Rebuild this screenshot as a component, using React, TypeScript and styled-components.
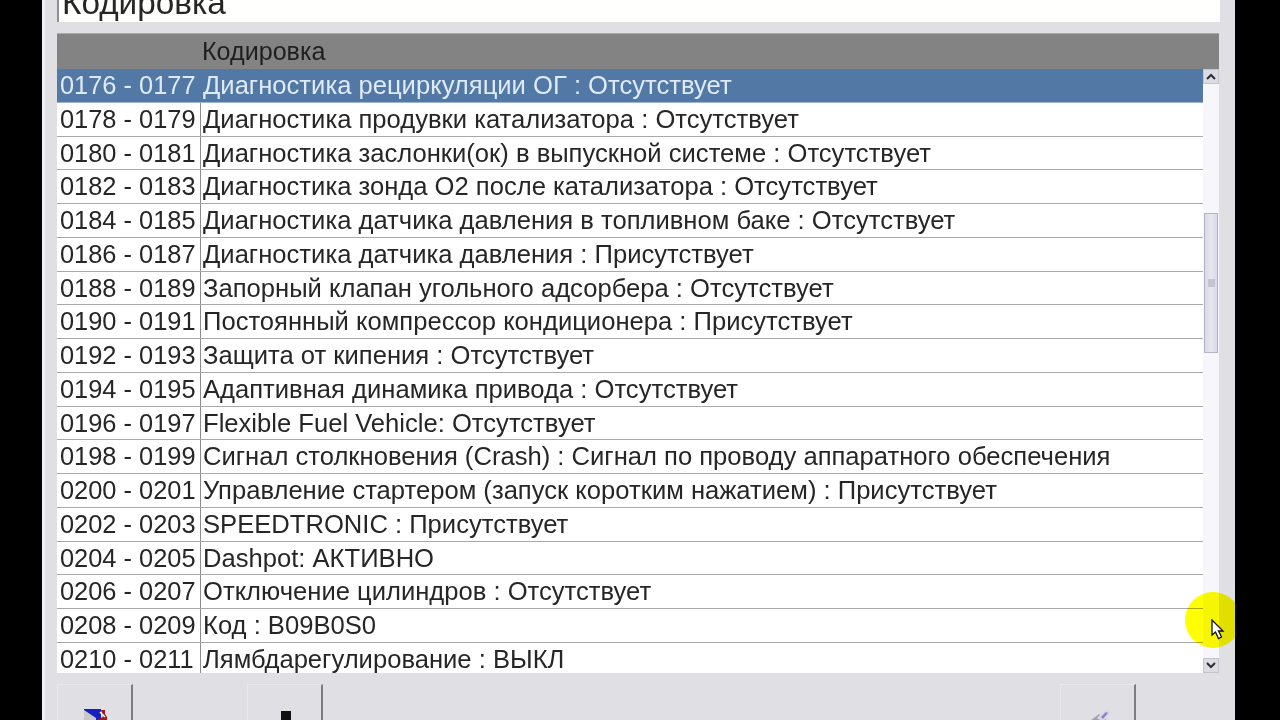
import React from "react"
import styled, { createGlobalStyle } from "styled-components"

const GlobalStyle = createGlobalStyle`
  html, body {
    margin: 0;
    height: 100%;
    overflow: hidden;
    background: #000;
  }
`

const rows = [
  ["0176 - 0177", "Диагностика рециркуляции ОГ : Отсутствует"],
  ["0178 - 0179", "Диагностика продувки катализатора : Отсутствует"],
  ["0180 - 0181", "Диагностика заслонки(ок) в выпускной системе : Отсутствует"],
  ["0182 - 0183", "Диагностика зонда О2 после катализатора : Отсутствует"],
  ["0184 - 0185", "Диагностика датчика давления в топливном баке : Отсутствует"],
  ["0186 - 0187", "Диагностика датчика давления : Присутствует"],
  ["0188 - 0189", "Запорный клапан угольного адсорбера : Отсутствует"],
  ["0190 - 0191", "Постоянный компрессор кондиционера : Присутствует"],
  ["0192 - 0193", "Защита от кипения : Отсутствует"],
  ["0194 - 0195", "Адаптивная динамика привода : Отсутствует"],
  ["0196 - 0197", "Flexible Fuel Vehicle: Отсутствует"],
  ["0198 - 0199", "Сигнал столкновения (Crash) : Сигнал по проводу аппаратного обеспечения"],
  ["0200 - 0201", "Управление стартером (запуск коротким нажатием) : Присутствует"],
  ["0202 - 0203", "SPEEDTRONIC : Присутствует"],
  ["0204 - 0205", "Dashpot: АКТИВНО"],
  ["0206 - 0207", "Отключение цилиндров : Отсутствует"],
  ["0208 - 0209", "Код : B09B0S0"],
  ["0210 - 0211", "Лямбдарегулирование : ВЫКЛ"],
]

const Screen = styled.div`
  box-sizing: border-box;
  position: relative;
  width: 1193px;
  height: 720px;
  margin-left: 42px;
  padding: 0 15px 0 12px;
  background: #e0dfe3;
  border-left: 3px solid #f0f0f2;
  display: flex;
  flex-direction: column;
  overflow: hidden;
  font-family: "Liberation Sans", Arial, sans-serif;
  color: #262626;
`

const TitleField = styled.div`
  box-sizing: border-box;
  flex: none;
  height: 22px;
  padding-left: 3px;
  background: #fffffd;
  border-left: 2px solid #8f8f8f;
  display: flex;
  align-items: flex-end;
  overflow: hidden;
  font-size: 33.3px;
  line-height: 30px;
`

const TitleText = styled.span`
  display: block;
  margin-bottom: 4px;
`

const Table = styled.div`
  flex: none;
  height: 640px;
  margin-top: 11px;
  margin-right: 1px;
  display: flex;
  flex-direction: column;
  overflow: hidden;
`

const HeaderRow = styled.div`
  flex: none;
  height: 36px;
  padding-left: 145px;
  background: #838383;
  border-top: 1px solid #a8a8a8;
  box-sizing: border-box;
  font-size: 25.1px;
  line-height: 34px;
  color: #1f1f1f;
`

const Body = styled.div`
  flex: 1;
  display: flex;
  min-height: 0;
  background: #fff;
`

const RowList = styled.div`
  flex: 1;
  min-width: 0;
  overflow: hidden;
`

const Row = styled.div<{ $selected?: boolean }>`
  box-sizing: border-box;
  height: 33.76px;
  display: flex;
  line-height: 33px;
  white-space: nowrap;
  background: ${(props) => (props.$selected ? "#5279a5" : "#fff")};
  color: ${(props) => (props.$selected ? "#dfeaf6" : "#262626")};
  border-bottom: 1px solid ${(props) => (props.$selected ? "#9db5d0" : "#a9a9a9")};
`

const CodeCell = styled.div<{ $selected?: boolean }>`
  box-sizing: border-box;
  flex: none;
  width: 144px;
  padding-left: 3px;
  font-size: 25.4px;
  border-right: 1px solid ${(props) => (props.$selected ? "#5279a5" : "#8c8c8c")};
`

const TextCell = styled.div`
  flex: 1;
  padding-left: 2px;
  font-size: 25.6px;
`

const ScrollTrack = styled.div`
  flex: none;
  width: 16px;
  display: flex;
  flex-direction: column;
  background: #f6f6fb;
`

const ScrollButton = styled.div`
  flex: none;
  height: 15px;
  display: flex;
  align-items: center;
  justify-content: center;
  background: #dcdce2;
  border: 1px solid #c4c4cc;
  box-sizing: border-box;
`

const ScrollSpace = styled.div<{ $grow: number }>`
  flex: ${(props) => props.$grow};
`

const ScrollThumb = styled.div`
  flex: none;
  box-sizing: border-box;
  height: 140px;
  margin: 0 1px;
  background: linear-gradient(90deg, #d8d8ea, #e8e8ee 50%, #d8d8ea);
  border: 1px solid #b4b4c2;
  display: flex;
  align-items: center;
  justify-content: center;
`

const Grip = styled.div`
  width: 7px;
  height: 8px;
  background: #c4c4ce;
`

const Toolbar = styled.div`
  flex: none;
  margin-top: 11px;
  height: 40px;
  display: flex;
`

const ToolButton = styled.div<{ $gap: number }>`
  box-sizing: border-box;
  flex: none;
  width: 76px;
  height: 40px;
  margin-right: ${(props) => props.$gap}px;
  display: flex;
  justify-content: center;
  padding: 24px 0 0 3px;
  background: #e0dfe3;
  border-top: 1px solid #e9e9eb;
  border-left: 1px solid #e9e9eb;
  border-right: 2px solid #7d7d7d;
`

const CursorSpot = styled.div`
  position: absolute;
  left: 1140px;
  top: 592px;
  width: 56px;
  height: 56px;
  border-radius: 50%;
  background: #ffff00;
  mix-blend-mode: multiply;
`

const CursorArrow = styled.svg`
  position: absolute;
  left: 1166px;
  top: 619px;
`

const Chevron = ({ up }: { up?: boolean }) => (
  <svg width="10" height="7" viewBox="0 0 10 7">
    <path
      d={up ? "M1 6L5 2L9 6" : "M1 1L5 5L9 1"}
      fill="none"
      stroke="#2c2c34"
      strokeWidth="2"
    />
  </svg>
)

const SaveIcon = () => (
  <svg width="26" height="16" viewBox="0 0 26 16">
    <path d="M1 0H18V16H1Z" fill="#1420c0" />
    <path d="M1 1L13 9V16H1Z" fill="#c8c8c8" />
    <path d="M18 1H22V5L24 8V16H15V10L20 8Z" fill="#a01818" />
    <path d="M17 3L22 8" stroke="#fff" strokeWidth="1.5" />
  </svg>
)

const BlackIcon = () => (
  <svg width="12" height="16" viewBox="0 0 12 16">
    <path d="M1 2H11V16H1Z" fill="#111" />
  </svg>
)

const PrintIcon = () => (
  <svg width="30" height="16" viewBox="0 0 30 16">
    <path d="M1 16L15 5L29 16Z" fill="#a4a4a4" />
    <path d="M13 9L22 0L27 3L19 13Z" fill="#d8d8e4" />
    <path d="M17 8L22 3L24 4L19 10Z" fill="#8a80cc" />
  </svg>
)

const App = (): JSX.Element => (
  <>
    <GlobalStyle />
    <Screen>
      <TitleField>
        <TitleText>Кодировка</TitleText>
      </TitleField>
      <Table>
        <HeaderRow>Кодировка</HeaderRow>
        <Body>
          <RowList>
            {rows.map(([code, text], i) => (
              <Row key={code} $selected={i === 0}>
                <CodeCell $selected={i === 0}>{code}</CodeCell>
                <TextCell>{text}</TextCell>
              </Row>
            ))}
          </RowList>
          <ScrollTrack>
            <ScrollButton>
              <Chevron up />
            </ScrollButton>
            <ScrollSpace $grow={129} />
            <ScrollThumb>
              <Grip />
            </ScrollThumb>
            <ScrollSpace $grow={304} />
            <ScrollButton>
              <Chevron />
            </ScrollButton>
          </ScrollTrack>
        </Body>
      </Table>
      <Toolbar>
        <ToolButton $gap={114}>
          <SaveIcon />
        </ToolButton>
        <ToolButton $gap={737}>
          <BlackIcon />
        </ToolButton>
        <ToolButton $gap={0}>
          <PrintIcon />
        </ToolButton>
      </Toolbar>
      <CursorSpot />
      <CursorArrow width="14" height="21" viewBox="0 0 14 21">
        <path d="M1 1V16L4.5 13L7.5 19.5L10.5 18L7.5 12H12Z" fill="#fff" stroke="#111" strokeWidth="1.3" />
      </CursorArrow>
    </Screen>
  </>
)

export default App
